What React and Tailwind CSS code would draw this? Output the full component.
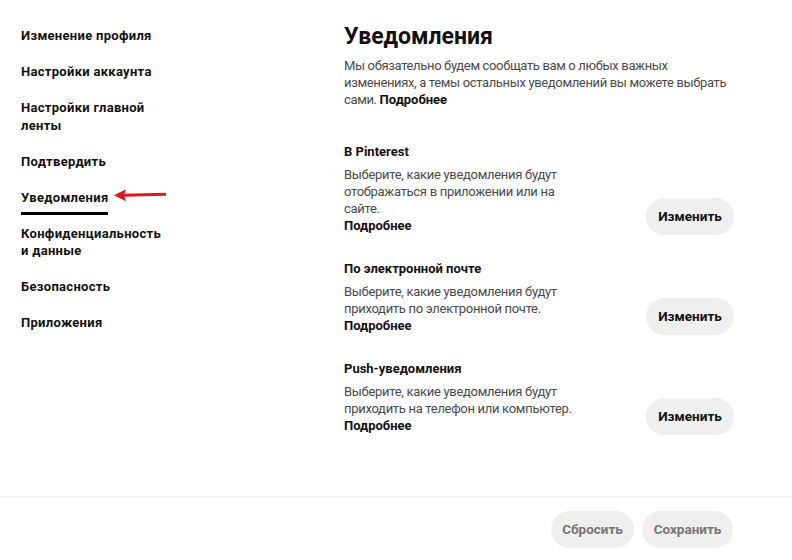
import React from 'react';

const navItems = [
  'Изменение профиля',
  'Настройки аккаунта',
  'Настройки главной ленты',
  'Подтвердить',
  'Уведомления',
  'Конфиденциальность и данные',
  'Безопасность',
  'Приложения',
];

const sections = [
  {
    id: 'pinterest',
    title: 'В Pinterest',
    text: 'Выберите, какие уведомления будут отображаться в приложении или на сайте.',
  },
  {
    id: 'email',
    title: 'По электронной почте',
    text: 'Выберите, какие уведомления будут приходить по электронной почте.',
  },
  {
    id: 'push',
    title: 'Push-уведомления',
    text: 'Выберите, какие уведомления будут приходить на телефон или компьютер.',
  },
];

const Arrow = () => (
  <svg width="52" height="14" viewBox="0 0 52 14" className="absolute left-full top-1/2 ml-[6px] -translate-y-[62%]">
    <path d="M10 7 L51 6" stroke="#e0161b" strokeWidth="3" strokeLinecap="round" />
    <path d="M0 7 L12 1 L10 7 L12 13 Z" fill="#e0161b" />
  </svg>
);

export default function App() {
  return (
    <div className="h-[560px] w-full bg-white flex flex-col text-[#111] font-['Roboto',sans-serif]">
      <div className="flex flex-1">
        {/* Sidebar */}
        <nav className="w-[344px] shrink-0 pl-[21px] pt-[27px]">
          <ul className="flex flex-col gap-[18.5px] w-[146px]">
            {navItems.map(item => (
              <li key={item} className="text-[13px] leading-[17.5px] font-bold tracking-[0.3px]">
                {item === 'Уведомления' ? (
                  <span className="relative inline-block">
                    {item}
                    <span className="absolute left-0 right-0 -bottom-[9px] h-[3px] bg-black" />
                    <Arrow />
                  </span>
                ) : item}
              </li>
            ))}
          </ul>
        </nav>

        {/* Content */}
        <main className="w-[390px] pt-[23px]">
          <h1 className="text-[23px] leading-[28px] font-bold">Уведомления</h1>
          <p className="mt-[6px] text-[13px] leading-[17px] text-[#4a4a4a] tracking-[-0.35px]">
            Мы обязательно будем сообщать вам о любых важных изменениях, а темы остальных уведомлений вы можете выбрать сами.{' '}
            <span className="font-bold text-[#111] tracking-normal">Подробнее</span>
          </p>

          <div className="mt-[35px] flex flex-col gap-[26px]">
            {sections.map(section => (
              <div key={section.id} className="flex items-end justify-between">
                <div>
                  <h2 className="text-[13px] leading-[17px] font-bold">{section.title}</h2>
                  <p className="mt-[6px] w-[240px] text-[13px] leading-[17px] text-[#4a4a4a] tracking-[-0.3px]">{section.text}</p>
                  <div className="text-[13px] leading-[17px] font-bold">Подробнее</div>
                </div>
                <button className="h-[37px] w-[88px] mb-[-1px] rounded-full bg-[#efefef] text-[13.5px] font-bold text-[#111]">
                  Изменить
                </button>
              </div>
            ))}
          </div>
        </main>
      </div>

      {/* Footer */}
      <footer className="h-[64px] shrink-0 border-t-2 border-[#f3f3f3] flex items-center justify-end gap-[8px] pr-[59px]">
        <button className="h-[37px] w-[83px] rounded-full bg-[#efefef] text-[13.5px] font-bold text-[#767676]">
          Сбросить
        </button>
        <button className="h-[37px] w-[91px] rounded-full bg-[#efefef] text-[13.5px] font-bold text-[#767676]">
          Сохранить
        </button>
      </footer>
    </div>
  );
}
